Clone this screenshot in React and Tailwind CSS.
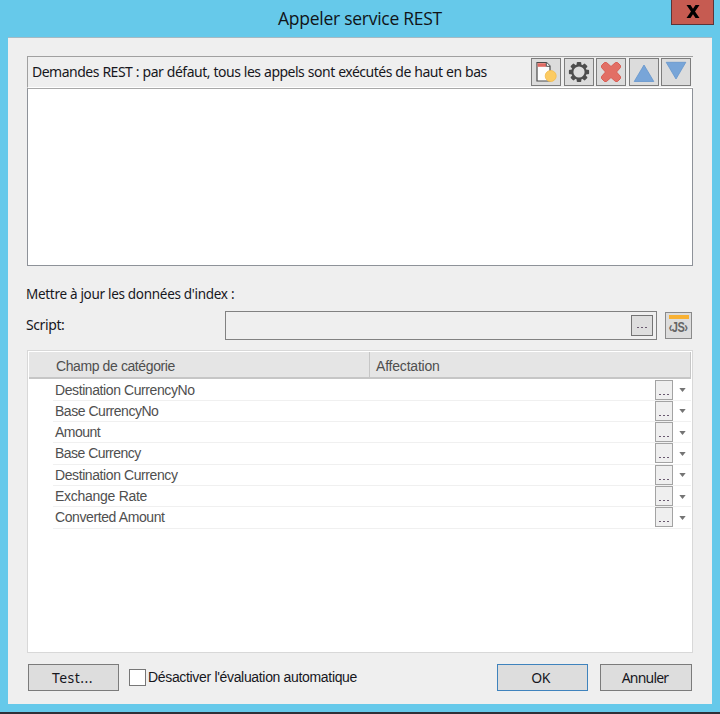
const fields = [
  { name: 'Destination CurrencyNo', tracking: 'tracking-[-0.41px]' },
  { name: 'Base CurrencyNo', tracking: 'tracking-[-0.47px]' },
  { name: 'Amount', tracking: 'tracking-[-0.5px]' },
  { name: 'Base Currency', tracking: 'tracking-[-0.53px]' },
  { name: 'Destination Currency', tracking: 'tracking-[-0.41px]' },
  { name: 'Exchange Rate', tracking: 'tracking-[-0.28px]' },
  { name: 'Converted Amount', tracking: 'tracking-[-0.4px]' },
]

function NewIcon() {
  return (
    <svg width="24" height="24" viewBox="0 0 24 24">
      <path d="M3 2.5h9.500l3.500 3.500V21H3z" fill="#fdfdfd" stroke="#4a4a4a" strokeWidth="1.2" />
      <path d="M3.6 3.200h8.400v3.600H3.600z" fill="#e06a63" />
      <path d="M12.300 2.500V6.300H16" fill="#fdfdfd" stroke="#4a4a4a" />
      <circle cx="16.7" cy="16" r="5.500" fill="#fccb62" stroke="#f3bb4c" strokeWidth="0.8" />
    </svg>
  )
}

function GearIcon() {
  const teeth = [0, 45, 90, 135, 180, 225, 270, 315]
  return (
    <svg width="24" height="24" viewBox="0 0 24 24">
      <circle cx="12" cy="12" r="6.700" fill="none" stroke="#4d4d4d" strokeWidth="2.200" />
      {teeth.map(a => (
        <rect key={a} x="9.700" y="1.900" width="4.600" height="4" rx="1" fill="#4d4d4d" transform={`rotate(${a} 12 12)`} />
      ))}
    </svg>
  )
}

function DeleteIcon() {
  return (
    <svg width="24" height="24" viewBox="0 0 24 24">
      <path
        d="M5.500 2.500H7.500L12 6.500 16.500 2.500H18.500L21.500 5.500V7.500L17.500 12 21.500 16.500V18.500L18.500 21.500H16.500L12 17.500 7.500 21.500H5.500L2.500 18.500V16.500L6.500 12 2.500 7.500V5.500z"
        fill="#e26f65"
        stroke="#d95c53"
        strokeWidth="1"
        strokeLinejoin="round"
      />
    </svg>
  )
}

function UpIcon() {
  return (
    <svg width="24" height="24" viewBox="0 0 24 24">
      <path d="M12 5 21.8 21.5H2.2z" fill="#78a5d8" stroke="#6595cd" strokeWidth="0.8" />
    </svg>
  )
}

function DownIcon() {
  return (
    <svg width="24" height="24" viewBox="0 0 24 24">
      <path d="M12 19 21.8 2.3H2.2z" fill="#78a5d8" stroke="#6595cd" strokeWidth="0.8" />
    </svg>
  )
}

function ToolButton({ label, children }) {
  return (
    <button aria-label={label} className="flex h-7 w-[30px] items-center justify-center border border-[#7d7d7d] bg-[#dcdcdc]">
      {children}
    </button>
  )
}

function Dots() {
  return (
    <span className="flex gap-[2px]">
      <i className="h-px w-[2px] bg-[#6a5a70]" />
      <i className="h-px w-[2px] bg-[#6a5a70]" />
      <i className="h-px w-[2px] bg-[#6a5a70]" />
    </span>
  )
}

function PushButton({ primary, className, children }) {
  return (
    <button
      className={`h-[27px] border bg-[#dddddd] text-sm leading-[25px] ${primary ? 'border-[#3f83bd]' : 'border-[#7b7b7b]'} ${className}`}
    >
      {children}
    </button>
  )
}

function FieldRow({ field }) {
  return (
    <div className="flex h-[21.3px]">
      <div className="ml-6 flex flex-1 border-b border-[#f0f0f0]">
        <span className={`flex-1 pl-[2px] font-['Liberation_Sans'] text-[14px] leading-[21px] text-[#4f4f4f] ${field.tracking}`}>
          {field.name}
        </span>
        <button aria-label="Parcourir" className="flex h-5 w-[18px] items-end justify-center border border-[#a3a3a3] bg-[#efefef] pb-1">
          <Dots />
        </button>
        <div className="flex w-[18px] items-center justify-center pt-px">
          <svg width="7" height="4" viewBox="0 0 7 4">
            <path d="M0.3 0h6.4L3.5 4z" fill="#747474" />
          </svg>
        </div>
      </div>
    </div>
  )
}

export default function App() {
  return (
    <div className="flex h-[714px] w-[720px] flex-col overflow-hidden border-b-2 border-[#303038] bg-[#66c9ea] px-2 pb-2 font-['Noto_Sans',sans-serif] text-[#17171d]">
      {/* Title bar */}
      <header className="relative flex h-[37px] shrink-0 justify-center">
        <h1 className="pt-[6px] font-['Open_Sans'] text-[17.5px] leading-6 tracking-[-0.27px] text-[#101418]">Appeler service REST</h1>
        <button aria-label="Fermer" className="absolute -right-[2px] top-0 flex h-[25px] w-[43px] items-center justify-center border border-t-0 border-[#5c3439] bg-[#c65b51]">
          <svg width="14" height="13" viewBox="0 0 14 12" preserveAspectRatio="none" className="-mt-[2px]">
            <path d="M0.5 0h4L7 3.5 9.500 0h4L9 6l4.500 6h-4L7 8.500 4.500 12h-4L5 6z" fill="#000" />
          </svg>
        </button>
      </header>

      <main className="flex flex-1 flex-col border-t border-[#a5bac4] bg-[#efefef] pl-[18px] pr-5 pt-[18px]">
        {/* REST requests */}
        <section className="ml-px -mr-px">
          <div className="flex h-8 items-start justify-between border-b border-l border-t border-[#a0a0a0] border-b-white pl-1 pr-[2px] pt-px">
            <span className="text-[14px] leading-7 tracking-[-0.5px] whitespace-nowrap [word-spacing:0.35px]">
              Demandes REST : par défaut, tous les appels sont exécutés de haut en bas
            </span>
            <div className="flex gap-[2.5px]">
              <ToolButton label="Nouveau"><NewIcon /></ToolButton>
              <ToolButton label="Paramètres"><GearIcon /></ToolButton>
              <ToolButton label="Supprimer"><DeleteIcon /></ToolButton>
              <ToolButton label="Monter"><UpIcon /></ToolButton>
              <ToolButton label="Descendre"><DownIcon /></ToolButton>
            </div>
          </div>
          <div className="h-[178px] border border-[#8e9299] border-t-[#a8a8a8] bg-white" />
        </section>

        <p className="mt-[18px] text-[13.5px] leading-5 tracking-[-0.3px]">Mettre à jour les données d'index :</p>

        <div className="mt-[7px] flex h-[29px] items-center">
          <span className="w-[199px] pb-[2px] text-[14px] tracking-[-0.4px]">Script:</span>
          <div className="flex h-[29px] w-[432px] items-center justify-end border border-[#818181] pr-[3px]">
            <button aria-label="Modifier le script" className="flex h-[21px] w-[22px] items-end justify-center border border-[#747474] bg-[#dedede] pb-[7px]">
              <Dots />
            </button>
          </div>
          <button className="ml-2 flex h-[27px] w-[27px] flex-col items-center border border-[#8a8a8a] bg-[#dddddd] pt-[2px]">
            <span className="h-1 w-5 shrink-0 bg-[#f8b133]" />
            <span className="scale-x-[0.85] scale-y-110 font-['Liberation_Sans'] text-[13px] font-bold leading-[17px] tracking-[-0.6px] text-[#666666]">‹JS›</span>
          </button>
        </div>

        {/* Category fields */}
        <section className="ml-px -mr-px mt-[10px] h-[303px] border border-[#d8d8d8] bg-white px-px pt-px">
          <div className="flex h-[27px] border-b-2 border-r border-[#c6c6c6] bg-[#e5e5e5] font-['Liberation_Sans'] text-[14px] leading-[28px] text-[#4f4f4f]">
            <div className="w-[341px] border-r border-[#c6c6c6] pl-[27px] tracking-[-0.4px]">Champ de catégorie</div>
            <div className="pl-[6px] tracking-[-0.2px]">Affectation</div>
          </div>
          <div className="pt-[0.5px]">
            {fields.map(f => <FieldRow key={f.name} field={f} />)}
          </div>
        </section>

        {/* Footer */}
        <footer className="mt-[11px] flex items-start pl-[2px]">
          <PushButton className="w-[91px] pr-[2px] tracking-[0.5px]">Test...</PushButton>
          <label className="ml-[10px] mt-[5px] flex">
            <span className="h-[17px] w-[17px] border border-[#777777] bg-white" />
            <span className="ml-[2px] font-['Liberation_Sans'] text-[14px] leading-4 tracking-[-0.33px]">Désactiver l'évaluation automatique</span>
          </label>
          <PushButton primary className="ml-auto w-[91px] pr-1 tracking-[-0.6px]">OK</PushButton>
          <PushButton className="ml-3 w-[92px] pr-[2px] tracking-[-0.8px]">Annuler</PushButton>
        </footer>
      </main>
    </div>
  )
}
